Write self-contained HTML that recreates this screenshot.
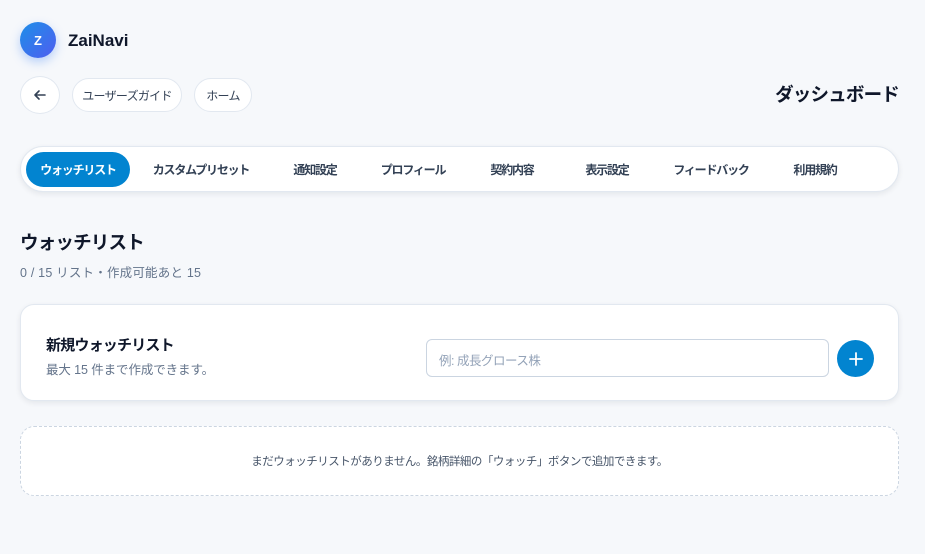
<!DOCTYPE html>
<html><head><meta charset="utf-8"><style>
*{box-sizing:border-box;margin:0;padding:0}
body{width:925px;height:554px;background:#f6f8fb;font-family:"Liberation Sans","Noto Sans CJK JP",sans-serif;color:#0f172a;position:relative;overflow:hidden;white-space:nowrap}
.abs{position:absolute}
.logo{left:20px;top:22px;width:36px;height:36px;border-radius:50%;background:linear-gradient(135deg,#1d8fe8,#4f5df0);color:#fff;font-weight:bold;font-size:13px;display:flex;align-items:center;justify-content:center;box-shadow:0 4px 10px rgba(59,130,246,.35)}
.brand{left:68px;top:31px;font-size:17px;font-weight:600}
.pill{top:78px;height:34px;border:1px solid #e2e8f0;background:#fff;border-radius:17px;font-size:12px;letter-spacing:-0.7px;color:#334155;display:flex;align-items:center;justify-content:center}
.title{right:26px;top:81px;font-size:18.5px;font-weight:bold;letter-spacing:-0.8px}
.tabs{left:20px;top:146px;width:879px;height:46px;background:#fff;border:1px solid #e2e8f0;border-radius:23px;box-shadow:0 2px 6px rgba(15,23,42,.08)}
.tab{position:absolute;top:5px;height:35px;font-size:12px;letter-spacing:-1.2px;color:#334155;display:flex;align-items:center;justify-content:center;font-weight:600}
.tab.on{background:#0284d0;color:#fff;border-radius:18px;font-weight:bold}
.card{left:20px;top:304px;width:879px;height:97px;background:#fff;border:1px solid #e2e8f0;border-radius:14px;box-shadow:0 2px 6px rgba(15,23,42,.08)}
.empty{left:20px;top:426px;width:879px;height:70px;border:1px dashed #cbd5e1;border-radius:14px;background:#fff;font-size:11.5px;letter-spacing:-0.5px;color:#475569;display:flex;align-items:center;justify-content:center}
</style></head><body>
<div class="abs logo">Z</div>
<div class="abs brand">ZaiNavi</div>
<div class="abs pill" style="left:20px;width:40px;height:38px;top:76px;border-radius:50%"><svg width="14" height="14" viewBox="0 0 14 14"><path d="M12 7H2M6 3L2 7l4 4" stroke="#334155" stroke-width="1.6" fill="none" stroke-linecap="round" stroke-linejoin="round"/></svg></div>
<div class="abs pill" style="left:72px;width:110px">ユーザーズガイド</div>
<div class="abs pill" style="left:194px;width:58px">ホーム</div>
<div class="abs title">ダッシュボード</div>
<div class="abs tabs">
<div class="tab on" style="left:5px;width:104px">ウォッチリスト</div>
<div class="tab" style="left:122px;width:116px">カスタムプリセット</div>
<div class="tab" style="left:258px;width:72px">通知設定</div>
<div class="tab" style="left:352px;width:80px">プロフィール</div>
<div class="tab" style="left:455px;width:72px">契約内容</div>
<div class="tab" style="left:550px;width:72px">表示設定</div>
<div class="tab" style="left:645px;width:90px">フィードバック</div>
<div class="tab" style="left:758px;width:72px">利用規約</div>
</div>
<div class="abs" style="left:20px;top:229px;font-size:18.5px;font-weight:bold;letter-spacing:-0.8px">ウォッチリスト</div>
<div class="abs" style="left:20px;top:262px;font-size:12.5px;letter-spacing:0.2px;color:#64748b">0 / 15 リスト・作成可能あと 15</div>
<div class="abs card">
<div class="abs" style="left:25px;top:29px;font-size:15px;font-weight:bold;letter-spacing:-0.8px">新規ウォッチリスト</div>
<div class="abs" style="left:25px;top:54px;font-size:12.5px;letter-spacing:-0.1px;color:#64748b">最大 15 件まで作成できます。</div>
<div class="abs" style="left:405px;top:34px;width:403px;height:38px;border:1px solid #cbd5e1;border-radius:6px;font-size:12.5px;letter-spacing:-0.5px;color:#94a3b8;padding:10px 12px">例: 成長グロース株</div>
<div class="abs" style="left:816px;top:35px;width:37px;height:37px;border-radius:50%;background:#0284d0;display:flex;align-items:center;justify-content:center"><svg width="16" height="16" viewBox="0 0 16 16"><path d="M8 2v12M2 8h12" stroke="#fff" stroke-width="1.8" stroke-linecap="round"/></svg></div>
</div>
<div class="abs empty">まだウォッチリストがありません。銘柄詳細の「ウォッチ」ボタンで追加できます。</div>
</body></html>
